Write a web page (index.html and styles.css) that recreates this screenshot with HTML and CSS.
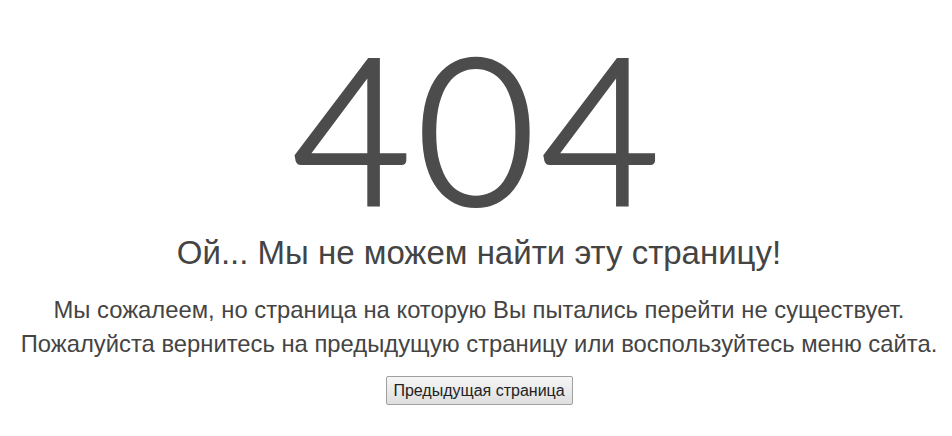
FILE: index.html
```html
<!DOCTYPE html>
<html lang="ru">
<head>
<meta charset="utf-8">
<link rel="stylesheet" href="styles.css">
</head>
<body>
<main class="page">
  <div class="code">404</div>
  <h1 class="title">Ой... Мы не можем найти эту страницу!</h1>
  <p class="text">Мы сожалеем, но страница на которую Вы пытались перейти не существует.<br>Пожалуйста вернитесь на предыдущую страницу или воспользуйтесь меню сайта.</p>
  <button class="back" type="button">Предыдущая страница</button>
</main>
</body>
</html>
```
FILE: styles.css
```css
html, body { margin: 0; padding: 0; background: #fff; }
.page {
  display: flex;
  flex-direction: column;
  align-items: center;
  text-align: center;
  font-family: "Liberation Sans", Arial, sans-serif;
  color: #444;
  padding: 27px 0 0 6px;
}
.code {
  font-family: Lato, sans-serif;
  font-weight: 300;
  font-size: 204px;
  line-height: 196px;
  color: #4c4c4c;
  -webkit-text-stroke: 4px #4c4c4c;
  letter-spacing: 6px;
}
.title {
  margin: 10px 0 0;
  font-weight: normal;
  font-size: 33px;
  line-height: 40px;
  color: #444;
}
.text {
  margin: 20px 0 0;
  font-size: 23.8px;
  line-height: 34px;
  color: #444;
}
.back {
  margin-top: 15px;
  width: 187px;
  height: 29px;
  padding: 0;
  font-family: "Liberation Sans", Arial, sans-serif;
  font-size: 16px;
  color: #222;
  background: linear-gradient(#f6f6f6, #dedede);
  border: 1px solid #a0a0a0;
  border-radius: 2px;
}
```
